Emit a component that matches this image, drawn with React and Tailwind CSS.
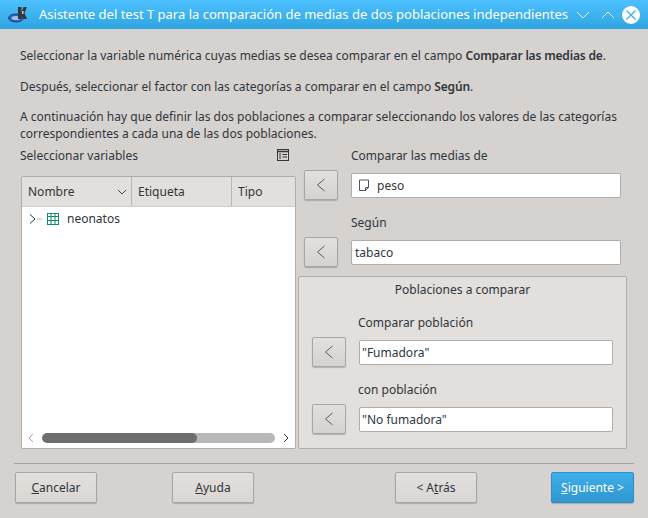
import React from "react";

const Chevron = () => (
  <svg width="10" height="14" viewBox="0 0 10 14" fill="none" stroke="#5a5a5a" strokeWidth="1">
    <path d="M8.5 1 L1.5 7 L8.5 13" />
  </svg>
);

const ArrowBtn = () => (
  <button className="w-[34px] h-[30px] shrink-0 flex items-center justify-center rounded-[2px] border border-[#a8a5a2] bg-gradient-to-b from-[#e3dfdd] to-[#d6d2d0] shadow-[0_1px_1px_rgba(0,0,0,0.2)]">
    <Chevron />
  </button>
);

const Field = ({ children }) => (
  <div className="flex-1 h-[25px] flex items-center px-[3px] bg-white border border-[#b0aeac] rounded-[2px] text-[#31363b]">
    {children}
  </div>
);

const Btn = ({ children, className = "" }) => (
  <button className={"w-[82px] h-[31px] rounded-[2px] border border-[#a8a5a2] bg-gradient-to-b from-[#e3dfdd] to-[#dad6d4] shadow-[0_1px_1px_rgba(0,0,0,0.2)] text-[#31363b] " + className}>
    {children}
  </button>
);

export default function App() {
  return (
    <div className="w-[648px] h-[518px] overflow-hidden flex flex-col bg-[#d6d2d0] text-[#31363b] text-[12px] leading-[17px] font-['Noto_Sans',sans-serif]">
      <div className="h-[29px] shrink-0 flex items-center bg-gradient-to-b from-[#4dc1ff] to-[#2da5e0] text-white">
        <svg className="ml-[8px] shrink-0" width="20" height="17" viewBox="0 0 20 17">
          <ellipse cx="8" cy="12" rx="7.5" ry="4" fill="#2f62b8" stroke="#1f3f86" />
          <ellipse cx="8" cy="12" rx="4.5" ry="2" fill="#9fc0ee" />
          <path d="M10 1 h3.5 v5 l2 -5 h3.5 l-2.5 6 l2.5 6 h-3.5 l-2 -3 v3 h-3.5 z" fill="#33383d" />
          <path d="M14 5 h1.5 v3 h-1.5 z" fill="#c9d2da" />
        </svg>
        <span className="ml-[11px] w-[529px] shrink-0 text-[13px] whitespace-nowrap">Asistente del test T para la comparación de medias de dos poblaciones independientes</span>
        <svg className="ml-[7px] shrink-0" width="16" height="10" viewBox="0 0 16 10" fill="none" stroke="#eaf7ff" strokeWidth="1">
          <path d="M2 2 L8 8 L14 2" />
        </svg>
        <svg className="ml-[9px] shrink-0" width="16" height="10" viewBox="0 0 16 10" fill="none" stroke="#eaf7ff" strokeWidth="1">
          <path d="M2 8 L8 2 L14 8" />
        </svg>
        <svg className="ml-[6px] shrink-0" width="18" height="18" viewBox="0 0 18 18">
          <circle cx="9" cy="9" r="9" fill="#ffffff" />
          <path d="M4.5 4.5 L13.5 13.5 M13.5 4.5 L4.5 13.5" stroke="#3aaee8" strokeWidth="1.2" />
        </svg>
      </div>

      <div className="flex-1 flex flex-col pl-[20px] pr-[14px]">
        <p className="mt-[18px] whitespace-nowrap">Seleccionar la variable numérica cuyas medias se desea comparar en el campo <b className="font-semibold tracking-[-0.17px]">Comparar las medias de</b>.</p>
        <p className="mt-[14px] whitespace-nowrap">Después, seleccionar el factor con las categorías a comparar en el campo <b className="font-semibold tracking-[-0.17px]">Según</b>.</p>
        <p className="mt-[13px] whitespace-nowrap">A continuación hay que definir las dos poblaciones a comparar seleccionando los valores de las categorías</p>
        <p className="whitespace-nowrap">correspondientes a cada una de las dos poblaciones.</p>

        <div className="mt-[2px] flex">
          <div className="w-[276px] shrink-0 flex flex-col">
            <div className="h-[20px] flex items-center justify-between pr-[7px] mt-[1px]">
              <span>Seleccionar variables</span>
              <svg width="12" height="12" viewBox="0 0 12 12" fill="none" stroke="#31363b">
                <rect x="0.5" y="0.5" width="11" height="11" />
                <path d="M0.5 2.5 H11.5" strokeWidth="1.5" />
                <path d="M2 5 H4 M2 7 H4 M2 9 H4 M5.5 5.5 H10 M5.5 8 H10" />
              </svg>
            </div>
            <div className="mt-[11px] ml-[1px] h-[273px] flex flex-col bg-white border border-[#b0aeac] rounded-[2px]">
              <div className="h-[30px] shrink-0 flex items-center bg-[#e2dfdc] border-b border-[#cfccca]">
                <div className="w-[110px] h-full flex items-center justify-between pl-[6px] pr-[4px] border-r border-[#b8b5b3]">
                  <span>Nombre</span>
                  <svg width="10" height="6" viewBox="0 0 10 6" fill="none" stroke="#4d4d4d">
                    <path d="M1 1 L5 5 L9 1" />
                  </svg>
                </div>
                <div className="w-[100px] h-full flex items-center pl-[6px] border-r border-[#b8b5b3]">Etiqueta</div>
                <div className="flex-1 h-full flex items-center pl-[6px]">Tipo</div>
              </div>
              <div className="flex-1 flex flex-col">
                <div className="h-[23px] flex items-center pl-[6px]">
                  <svg width="14" height="14" viewBox="0 0 14 14" fill="none" stroke="#31363b">
                    <path d="M2 2.5 L7 7 L2 11.5" />
                    <path d="M9 7 H14" stroke="#b8b5b3" />
                  </svg>
                  <svg className="ml-[5px]" width="12" height="12" viewBox="0 0 12 12" fill="none" stroke="#0f8a6b">
                    <rect x="0.5" y="0.5" width="11" height="11" />
                    <path d="M0.5 3.5 H11.5 M0.5 7.5 H11.5 M4 0.5 V11.5 M8 0.5 V11.5" />
                  </svg>
                  <span className="ml-[8px]">neonatos</span>
                </div>
                <div className="flex-1" />
                <div className="h-[10px] mb-[5px] flex items-center pl-[6px] pr-[6px]">
                  <svg width="6" height="10" viewBox="0 0 6 10" fill="none" stroke="#aaa7a5">
                    <path d="M5 1 L1 5 L5 9" />
                  </svg>
                  <div className="ml-[8px] w-[233px] h-[10px] rounded-full bg-[#b9b8b7] overflow-hidden">
                    <div className="w-[155px] h-full rounded-full bg-[#6e6e6e]" />
                  </div>
                  <svg className="ml-[8px]" width="6" height="10" viewBox="0 0 6 10" fill="none" stroke="#31363b">
                    <path d="M1 1 L5 5 L1 9" />
                  </svg>
                </div>
              </div>
            </div>
          </div>

          <div className="ml-[2px] w-[329px] flex flex-col">
            <div className="pl-[6px] pr-[6px] flex flex-col">
              <div className="ml-[47px] h-[17px] mt-[3px]">Comparar las medias de</div>
              <div className="mt-[6px] flex items-center gap-[13px]">
                <ArrowBtn />
                <Field>
                  <svg className="ml-[3px]" width="12" height="13" viewBox="0 0 12 13" fill="none" stroke="#4d5660">
                    <path d="M1.5 1 H10.5 V8.5 L7.5 11.5 H1.5 Z M7.5 11.5 V8.5 H10.5" />
                  </svg>
                  <span className="ml-[7px]">peso</span>
                </Field>
              </div>
              <div className="ml-[47px] h-[17px] mt-[14px]">Según</div>
              <div className="mt-[6px] flex items-center gap-[13px]">
                <ArrowBtn />
                <Field>tabaco</Field>
              </div>
            </div>
            <div className="mt-[9px] h-[173px] flex flex-col bg-[#e2dfdc] border border-[#b0aeac] rounded-[2px] pl-[13px] pr-[13px]">
              <div className="mt-[4px] h-[17px] text-center">Poblaciones a comparar</div>
              <div className="ml-[46px] h-[17px] mt-[16px]">Comparar población</div>
              <div className="mt-[6px] flex items-center gap-[13px]">
                <ArrowBtn />
                <Field><span className="-ml-px">"Fumadora"</span></Field>
              </div>
              <div className="ml-[46px] h-[17px] mt-[14px]">con población</div>
              <div className="mt-[6px] flex items-center gap-[13px]">
                <ArrowBtn />
                <Field><span className="-ml-px">"No fumadora"</span></Field>
              </div>
            </div>
          </div>
        </div>

        <div className="ml-[-6px] mt-[14px] h-px bg-[#a8a5a2]" />
        <div className="ml-[-5px] mt-[8px] flex items-start">
          <Btn><u>C</u>ancelar</Btn>
          <Btn className="ml-[75px]"><u>A</u>yuda</Btn>
          <Btn className="ml-[141px]">&lt; A<u>t</u>rás</Btn>
          <button className="ml-[74px] w-[83px] h-[31px] rounded-[2px] border border-[#2b8fc9] bg-gradient-to-b from-[#3daee9] to-[#3197cf] shadow-[0_1px_1px_rgba(0,0,0,0.2)] text-white">
            <u>S</u>iguiente &gt;
          </button>
        </div>
      </div>
    </div>
  );
}
